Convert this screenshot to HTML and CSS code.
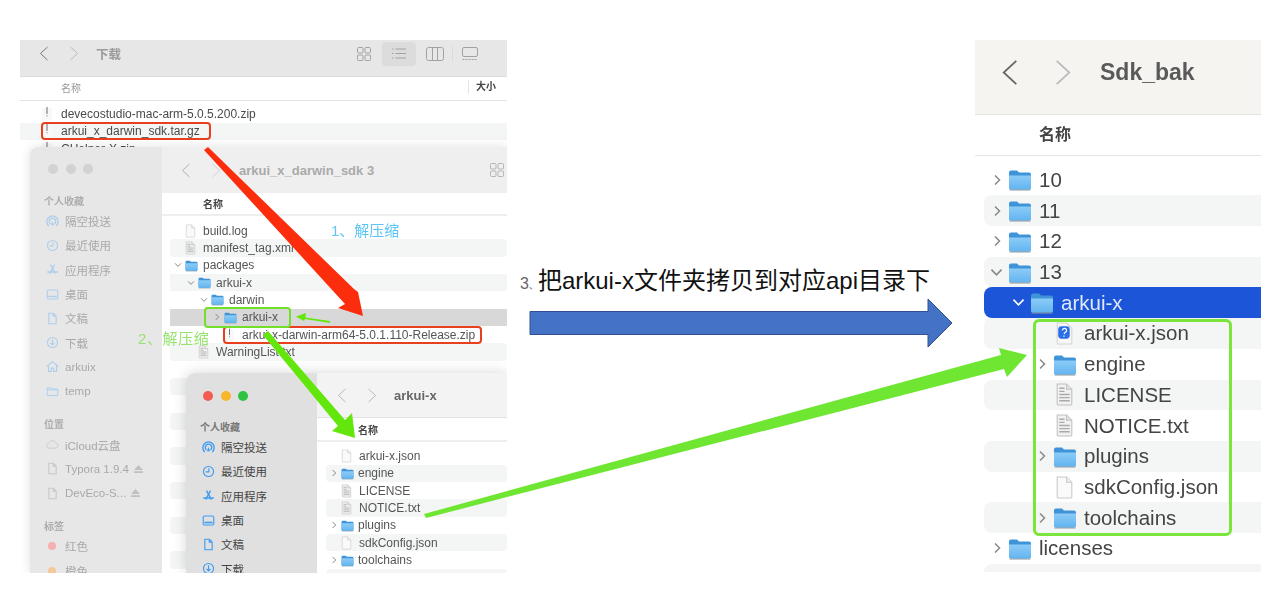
FILE: index.html
```html
<!DOCTYPE html>
<html lang="zh">
<head>
<meta charset="utf-8">
<title>arkui-x</title>
<link rel="stylesheet" href="styles.css">
</head>
<body>
<svg class="defs" width="0" height="0" aria-hidden="true">
  <defs>
    <linearGradient id="fg" x1="0" y1="0" x2="0" y2="1"><stop offset="0" stop-color="#8cccf7"/><stop offset="1" stop-color="#62b4f0"/></linearGradient>
    <symbol id="folder" viewBox="0 0 24 22">
      <path d="M1 4a2 2 0 0 1 2-2h6l2 2h10a2 2 0 0 1 2 2v13a2 2 0 0 1-2 2H3a2 2 0 0 1-2-2z" fill="#3f93d8"/>
      <path d="M1 7h22v12a2 2 0 0 1-2 2H3a2 2 0 0 1-2-2z" fill="url(#fg)"/>
      <path d="M1.500 21.500h21" stroke="#8f9aa3" stroke-width="1"/>
    </symbol>
    <symbol id="file" viewBox="0 0 18 22">
      <path d="M2 1h9l5 5v14a1 1 0 0 1-1 1H3a1 1 0 0 1-1-1z" fill="#fafafa" stroke="#c9c9c9"/>
      <path d="M11 1v5h5" fill="#eee" stroke="#c9c9c9"/>
    </symbol>
    <symbol id="doc" viewBox="0 0 18 22">
      <path d="M2 1h9l5 5v14a1 1 0 0 1-1 1H3a1 1 0 0 1-1-1z" fill="#f1f1f1" stroke="#c0c0c0"/>
      <path d="M11 1v5h5" fill="#e2e2e2" stroke="#c0c0c0"/>
      <path d="M4 5h5M4 8h5M4 11h10M4 14h10M4 17h10" stroke="#aaa" stroke-width="1.300"/>
    </symbol>
    <symbol id="json" viewBox="0 0 18 22">
      <path d="M2 1h9l5 5v14a1 1 0 0 1-1 1H3a1 1 0 0 1-1-1z" fill="#f7f7f7" stroke="#d5d5d5"/>
      <rect x="3" y="4" width="11" height="12" rx="3" fill="#2a6fe8"/>
      <path d="M7 8a2 2 0 1 1 2.500 2L8.500 11.500M8.500 13v1" fill="none" stroke="#fff" stroke-width="1.200"/>
    </symbol>
    <symbol id="zipfile" viewBox="0 0 12 14">
      <path d="M1 1h9l1 1v12H1z" fill="#f8f8f8"/>
      <path d="M6 0v7" stroke="#777" stroke-width="1.100"/>
      <path d="M6 8v1.500" stroke="#aaa" stroke-width="1.100"/>
    </symbol>
    <symbol id="chev-r" viewBox="0 0 8 12"><path d="M2 1.500 6.500 6 2 10.500" fill="none" stroke="currentColor" stroke-width="1.500"/></symbol>
    <symbol id="chev-t" viewBox="0 0 10 15"><path d="M1.500 1 8.500 7.500 1.500 14" fill="none" stroke="currentColor" stroke-width="1"/></symbol>
    <symbol id="chev-d" viewBox="0 0 12 8"><path d="M1.500 1.500 6 6l4.500-4.500" fill="none" stroke="currentColor" stroke-width="1.500"/></symbol>
    <symbol id="s-air" viewBox="0 0 16 16"><g fill="none" stroke="currentColor" stroke-width="1.700"><path d="M3.500 13.500a7 7 0 1 1 9 0"/><path d="M5.500 11a4 4 0 1 1 5 0"/></g><path d="M8 7.500l2 5H6z" fill="currentColor"/></symbol>
    <symbol id="s-clock" viewBox="0 0 16 16"><circle cx="8" cy="8" r="6.200" fill="none" stroke="currentColor" stroke-width="1.400"/><path d="M8.500 4v4.500H4.500" fill="none" stroke="currentColor" stroke-width="1.400"/></symbol>
    <symbol id="s-app" viewBox="0 0 16 16"><path d="M5.500 2l6 11M10.500 2l-6 11M1.500 11h13" fill="none" stroke="currentColor" stroke-width="1.700"/></symbol>
    <symbol id="s-desk" viewBox="0 0 16 16"><rect x="1.500" y="2.500" width="13" height="11" rx="1.500" fill="none" stroke="currentColor" stroke-width="1.400"/><path d="M3 10.500h10" stroke="currentColor" stroke-width="2"/></symbol>
    <symbol id="s-doc" viewBox="0 0 16 16"><path d="M3.500 1.500h5.500l3.500 3.500v9.500h-9z M9 1.500V5h3.500" fill="none" stroke="currentColor" stroke-width="1.400"/></symbol>
    <symbol id="s-down" viewBox="0 0 16 16"><circle cx="8" cy="8" r="6.200" fill="none" stroke="currentColor" stroke-width="1.400"/><path d="M8 4v7M5.500 8.500 8 11l2.500-2.500" fill="none" stroke="currentColor" stroke-width="1.400"/></symbol>
    <symbol id="s-home" viewBox="0 0 16 16"><path d="M1 8l7-6 7 6M3 7v7h3.500v-4h3v4H13V7" fill="none" stroke="currentColor" stroke-width="1.400"/></symbol>
    <symbol id="s-folder" viewBox="0 0 16 16"><path d="M1.500 3.500h4.500l1.500 1.500h7v8h-13zM1.500 6h13" fill="none" stroke="currentColor" stroke-width="1.200"/></symbol>
    <symbol id="s-cloud" viewBox="0 0 16 16"><path d="M4 12.500a3 3 0 0 1-.5-6A4.500 4.500 0 0 1 12 6a3.300 3.300 0 0 1 0 6.500z" fill="none" stroke="currentColor" stroke-width="1"/></symbol>
    <symbol id="s-eject" viewBox="0 0 10 9"><path d="M5 0l5 5.500H0zM0 7h10v2H0z" fill="currentColor"/></symbol>
  </defs>
</svg>

<main class="canvas">
  <section class="win win-a">
    <header class="a-head">
      <svg class="a-back"><use href="#chev-t"/></svg>
      <svg class="a-fwd"><use href="#chev-t"/></svg>
      <h2 class="a-title">下载</h2>
      <svg class="a-tool a-grid" viewBox="0 0 14 14"><g fill="none" stroke="currentColor"><rect x=".5" y=".5" width="5.500" height="5.500" rx="1"/><rect x="8" y=".5" width="5.500" height="5.500" rx="1"/><rect x=".5" y="8" width="5.500" height="5.500" rx="1"/><rect x="8" y="8" width="5.500" height="5.500" rx="1"/></g></svg>
      <span class="a-sel"><svg class="a-list" viewBox="0 0 14 11"><path d="M0 1h1.500M3.500 1H14M0 5.500h1.500M3.500 5.500H14M0 10h1.500M3.500 10H14" stroke="currentColor"/></svg></span>
      <svg class="a-tool a-cols" viewBox="0 0 18 14"><g fill="none" stroke="currentColor"><rect x=".5" y=".5" width="17" height="13" rx="2"/><path d="M6.500 .5v13M11.500 .5v13"/></g></svg>
      <span class="a-div"></span>
      <svg class="a-tool a-gal" viewBox="0 0 16 14"><g fill="none" stroke="currentColor"><rect x=".5" y=".5" width="15" height="9" rx="1.500"/><path d="M.5 12.500h15" stroke-dasharray="2 1"/></g></svg>
    </header>
    <div class="a-cols-head"><span class="a-name">名称</span><span class="a-size">大小</span></div>
    <ul class="a-rows">
      <li class="a-row"><svg class="a-zip"><use href="#zipfile"/></svg>devecostudio-mac-arm-5.0.5.200.zip</li>
      <li class="a-row band"><svg class="a-zip"><use href="#zipfile"/></svg>arkui_x_darwin_sdk.tar.gz</li>
      <li class="a-row"><svg class="a-zip"><use href="#zipfile"/></svg>CHelper-X.zip</li>
    </ul>
  </section>

  <section class="win win-b">
    <aside class="side side-b">
      <div class="lights"><i></i><i></i><i></i></div>
      <p class="side-h">个人收藏</p>
      <p class="side-i"><svg><use href="#s-air"/></svg>隔空投送</p>
      <p class="side-i"><svg><use href="#s-clock"/></svg>最近使用</p>
      <p class="side-i"><svg><use href="#s-app"/></svg>应用程序</p>
      <p class="side-i"><svg><use href="#s-desk"/></svg>桌面</p>
      <p class="side-i"><svg><use href="#s-doc"/></svg>文稿</p>
      <p class="side-i"><svg><use href="#s-down"/></svg>下载</p>
      <p class="side-i"><svg><use href="#s-home"/></svg>arkuix</p>
      <p class="side-i"><svg><use href="#s-folder"/></svg>temp</p>
      <p class="side-h gap">位置</p>
      <p class="side-i grey"><svg><use href="#s-cloud"/></svg>iCloud云盘</p>
      <p class="side-i grey"><svg><use href="#s-doc"/></svg>Typora 1.9.4<svg class="eject"><use href="#s-eject"/></svg></p>
      <p class="side-i grey"><svg><use href="#s-doc"/></svg>DevEco-S...<svg class="eject"><use href="#s-eject"/></svg></p>
      <p class="side-h gap">标签</p>
      <p class="side-i"><b class="dot red"></b>红色</p>
      <p class="side-i"><b class="dot orange"></b>橙色</p>
    </aside>
    <div class="pane">
      <header class="b-head">
        <svg class="b-back"><use href="#chev-t"/></svg>
        <svg class="b-fwd"><use href="#chev-t"/></svg>
        <h2 class="b-title">arkui_x_darwin_sdk 3</h2>
        <svg class="b-grid" viewBox="0 0 14 14"><g fill="none" stroke="currentColor"><rect x=".5" y=".5" width="5.500" height="5.500" rx="1"/><rect x="8" y=".5" width="5.500" height="5.500" rx="1"/><rect x=".5" y="8" width="5.500" height="5.500" rx="1"/><rect x="8" y="8" width="5.500" height="5.500" rx="1"/></g></svg>
      </header>
      <div class="b-cols">名称</div>
      <ul class="rows rows-b">
        <li class="row l0"><svg class="fi"><use href="#file"/></svg>build.log</li>
        <li class="row l0 band"><svg class="fi"><use href="#doc"/></svg>manifest_tag.xml</li>
        <li class="row l0"><svg class="ch"><use href="#chev-d"/></svg><svg class="fo"><use href="#folder"/></svg>packages</li>
        <li class="row l1 band"><svg class="ch"><use href="#chev-d"/></svg><svg class="fo"><use href="#folder"/></svg>arkui-x</li>
        <li class="row l2"><svg class="ch"><use href="#chev-d"/></svg><svg class="fo"><use href="#folder"/></svg>darwin</li>
        <li class="row l3 picked"><svg class="ch"><use href="#chev-r"/></svg><svg class="fo"><use href="#folder"/></svg>arkui-x</li>
        <li class="row l3"><svg class="fi"><use href="#zipfile"/></svg>arkui-x-darwin-arm64-5.0.1.110-Release.zip</li>
        <li class="row l1 band"><svg class="fi"><use href="#doc"/></svg>WarningList.txt</li>
        <li class="row"></li><li class="row band"></li><li class="row"></li><li class="row band"></li>
        <li class="row"></li><li class="row band"></li><li class="row"></li><li class="row band"></li>
        <li class="row"></li><li class="row band"></li><li class="row"></li><li class="row band"></li>
      </ul>
    </div>
  </section>

  <section class="win win-c">
    <aside class="side side-c">
      <div class="lights"><i></i><i></i><i></i></div>
      <p class="side-h">个人收藏</p>
      <p class="side-i"><svg><use href="#s-air"/></svg>隔空投送</p>
      <p class="side-i"><svg><use href="#s-clock"/></svg>最近使用</p>
      <p class="side-i"><svg><use href="#s-app"/></svg>应用程序</p>
      <p class="side-i"><svg><use href="#s-desk"/></svg>桌面</p>
      <p class="side-i"><svg><use href="#s-doc"/></svg>文稿</p>
      <p class="side-i"><svg><use href="#s-down"/></svg>下载</p>
    </aside>
    <div class="pane">
      <header class="c-head">
        <svg class="c-back"><use href="#chev-t"/></svg>
        <svg class="c-fwd"><use href="#chev-t"/></svg>
        <h2 class="c-title">arkui-x</h2>
      </header>
      <div class="c-cols">名称</div>
      <ul class="rows rows-c">
        <li class="row"><svg class="fi"><use href="#file"/></svg>arkui-x.json</li>
        <li class="row band"><svg class="ch"><use href="#chev-r"/></svg><svg class="fo"><use href="#folder"/></svg>engine</li>
        <li class="row"><svg class="fi"><use href="#doc"/></svg>LICENSE</li>
        <li class="row band"><svg class="fi"><use href="#doc"/></svg>NOTICE.txt</li>
        <li class="row"><svg class="ch"><use href="#chev-r"/></svg><svg class="fo"><use href="#folder"/></svg>plugins</li>
        <li class="row band"><svg class="fi"><use href="#file"/></svg>sdkConfig.json</li>
        <li class="row"><svg class="ch"><use href="#chev-r"/></svg><svg class="fo"><use href="#folder"/></svg>toolchains</li>
        <li class="row band"></li>
      </ul>
    </div>
  </section>

  <section class="win win-d">
    <header class="d-head">
      <svg class="d-back"><use href="#chev-t"/></svg>
      <svg class="d-fwd"><use href="#chev-t"/></svg>
      <h2 class="d-title">Sdk_bak</h2>
    </header>
    <div class="d-cols">名称</div>
    <ul class="d-rows">
      <li class="d-row"><svg class="ch"><use href="#chev-r"/></svg><svg class="fo"><use href="#folder"/></svg>10</li>
      <li class="d-row band"><svg class="ch"><use href="#chev-r"/></svg><svg class="fo"><use href="#folder"/></svg>11</li>
      <li class="d-row"><svg class="ch"><use href="#chev-r"/></svg><svg class="fo"><use href="#folder"/></svg>12</li>
      <li class="d-row band"><svg class="ch-d"><use href="#chev-d"/></svg><svg class="fo"><use href="#folder"/></svg>13</li>
      <li class="d-row d1 sel"><svg class="ch-d"><use href="#chev-d"/></svg><svg class="fo"><use href="#folder"/></svg>arkui-x</li>
      <li class="d-row d2 band"><svg class="fi"><use href="#json"/></svg>arkui-x.json</li>
      <li class="d-row d2"><svg class="ch"><use href="#chev-r"/></svg><svg class="fo"><use href="#folder"/></svg>engine</li>
      <li class="d-row d2 band"><svg class="fi"><use href="#doc"/></svg>LICENSE</li>
      <li class="d-row d2"><svg class="fi"><use href="#doc"/></svg>NOTICE.txt</li>
      <li class="d-row d2 band"><svg class="ch"><use href="#chev-r"/></svg><svg class="fo"><use href="#folder"/></svg>plugins</li>
      <li class="d-row d2"><svg class="fi"><use href="#file"/></svg>sdkConfig.json</li>
      <li class="d-row d2 band"><svg class="ch"><use href="#chev-r"/></svg><svg class="fo"><use href="#folder"/></svg>toolchains</li>
      <li class="d-row"><svg class="ch"><use href="#chev-r"/></svg><svg class="fo"><use href="#folder"/></svg>licenses</li>
      <li class="d-row band"></li>
    </ul>
  </section>

  <span class="note note-1">1、解压缩</span>
  <span class="note note-2">2、解压缩</span>
  <p class="step"><span class="step-n">3<span class="step-s">、</span></span>把arkui-x文件夹拷贝到对应api目录下</p>

  <span class="box box-r1"></span>
  <span class="box box-r2"></span>
  <span class="box box-g1"></span>
  <span class="box box-g2"></span>

  <svg class="marks" viewBox="0 0 1287 597" aria-hidden="true">
    <polygon class="m-blue" points="530,311.500 928,311.500 928,299 952,323 928,347 928,334.500 530,334.500"/>
    <polygon class="m-red" points="204,150 208,147 354,289 358,292 363,316 338,308 345,304"/>
    <polygon class="m-green" points="330,321 305.500,317.500 306,313 296,316.500 304,321 305,319 330,323"/>
    <polygon class="m-green" points="263,335 268,331 345,420 352,413 355,438 332,431 338,426"/>
    <polygon class="m-lime" points="424,514 1001,355 999,348 1027,355 1007,377 1004,369 426,518"/>
  </svg>
</main>
</body>
</html>
```
FILE: styles.css
```css
* { box-sizing: border-box; }
html, body { margin: 0; padding: 0; background: #fff; }
body { font-family: "Liberation Sans", "Noto Sans CJK SC", sans-serif; color: #555; }
.defs { position: absolute; }
.canvas { position: relative; width: 1287px; height: 597px; overflow: hidden; }
ul { list-style: none; margin: 0; padding: 0; }
p, h2 { margin: 0; }
svg { display: block; flex: none; }

.win { position: absolute; overflow: hidden; filter: blur(.45px); }
.band { background: #f4f5f5; }

/* window A: 下载 */
.win-a { left: 20px; top: 40px; width: 487px; height: 120px; background: #fff; }
.a-head { display: flex; align-items: center; height: 37px; padding-bottom: 9px; background: #e8e7e7; border-bottom: 1px solid #dcdcdc; }
.a-back { width: 10px; height: 15px; margin-left: 19px; color: #777; transform: scaleX(-1); }
.a-fwd { width: 10px; height: 15px; margin-left: 20px; color: #bbb; }
.a-title { margin-left: 17px; width: 261px; font-size: 12.500px; font-weight: 700; color: #9a9a9a; }
.a-tool { color: #a2a2a2; }
.a-grid { width: 14px; height: 14px; }
.a-sel { display: flex; align-items: center; justify-content: center; width: 34px; height: 24px; margin-left: 11px; border-radius: 4px; background: #dcdcdc; color: #a2a2a2; }
.a-list { width: 14px; height: 11px; }
.a-cols { width: 18px; height: 14px; margin-left: 10px; }
.a-div { width: 1px; height: 16px; margin-left: 8px; background: #dbdbdb; }
.a-gal { width: 16px; height: 14px; margin-left: 9px; }
.a-cols-head { display: flex; align-items: center; height: 23.500px; padding-bottom: 2px; border-bottom: 1px solid #e3e3e3; font-size: 10px; }
.a-name { margin-left: 41px; width: 407px; color: #999; }
.a-size { padding-left: 7px; border-left: 1px solid #e3e3e3; line-height: 14px; font-weight: 700; color: #444; }
.a-rows { padding-top: 4.500px; }
.a-row { display: flex; align-items: center; height: 17.500px; padding-left: 21px; font-size: 12px; color: #4a4a4a; }
.a-zip { width: 12px; height: 14px; margin-right: 8px; }

/* sidebars */
.side { flex: none; width: 132px; padding-top: 17px; font-size: 11.500px; }
.lights { display: flex; gap: 7.500px; height: 10px; margin-left: 18px; margin-bottom: 21px; }
.lights i { width: 10px; height: 10px; border-radius: 50%; background: #d2d2d2; }
.side-h { height: 14px; line-height: 14px; margin-left: 14px; font-size: 10px; font-weight: 700; color: #adadad; }
.side-h.gap { margin-top: 15px; }
.side-i { display: flex; align-items: center; height: 24.300px; margin-left: 16px; color: #a9a9a9; }
.side-i svg { width: 13px; height: 13px; margin-right: 6px; color: #aecfec; }
.side-i.grey svg { color: #c8c8c8; }
.side-i svg.eject { width: 9px; height: 8px; margin: 0 0 0 5px; color: #c0c0c0; }
.dot { width: 8px; height: 8px; margin: 0 9px 0 2px; border-radius: 50%; }
.dot.red { background: #f6b0b0; }
.dot.orange { background: #f5c89a; }

/* window B */
.win-b { display: flex; left: 30px; top: 147px; width: 477px; height: 426px; background: #fff; border-radius: 8px 0 0 0; box-shadow: 0 0 12px rgba(0,0,0,.12); filter: none; overflow: visible; clip-path: inset(-12px 0 0 -12px); }
.side-b { background: #e8e7e7; border-radius: 8px 0 0 0; filter: blur(.45px); overflow: hidden; }
.pane { flex: 1; min-width: 0; overflow: hidden; filter: blur(.45px); }
.b-head { display: flex; align-items: center; height: 46px; background: #f0efef; }
.b-back { width: 10px; height: 15px; margin-left: 19px; color: #b0b0b0; transform: scaleX(-1); }
.b-fwd { width: 10px; height: 15px; margin-left: 20px; color: #d5d5d5; }
.b-title { width: 251px; margin-left: 18px; font-size: 13px; font-weight: 700; color: #aaa; white-space: nowrap; }
.b-grid { width: 14px; height: 14px; color: #b5b5b5; }
.b-cols { display: flex; align-items: center; height: 23px; padding-left: 41px; border-bottom: 2px solid #eee; font-size: 10px; font-weight: 700; color: #444; }
.rows-b { margin: 6px 0 0 8px; }
.row { position: relative; display: flex; align-items: center; height: 17.330px; border-radius: 4px; font-size: 12px; color: #555; white-space: nowrap; }
.row .fo { width: 13px; height: 13px; margin-right: 5px; }
.row .fi { width: 11px; height: 14px; margin-right: 7px; }
.row .ch { width: 8px; height: 8px; margin-right: 3px; color: #888; }
.rows-b .l0 { padding-left: 15px; }
.rows-b .l1 { padding-left: 28px; }
.rows-b .l2 { padding-left: 41px; }
.rows-b .l3 { padding-left: 54px; }
.rows-b .row:has(.ch) { margin-left: -11px; border-radius: 0; }
.rows-b .band:has(.ch) { background: linear-gradient(90deg, #fff 11px, #f4f5f5 11px); }
.rows-b .picked:has(.ch) { background: linear-gradient(90deg, #fff 11px, #d8d8d8 11px); }

/* window C */
.win-c { display: flex; left: 186px; top: 373px; width: 321px; height: 200px; background: #fff; border-radius: 9px 0 0 0; box-shadow: 0 0 14px rgba(0,0,0,.16); filter: none; clip-path: inset(-14px 0 0 -14px); }
.side-c { width: 131px; background: #e0e0e0; padding-top: 18px; filter: blur(.45px); }
.side-c .lights { margin-left: 17px; margin-bottom: 20px; }
.side-c .lights i:nth-child(1) { background: #f25a52; }
.side-c .lights i:nth-child(2) { background: #f9b52b; }
.side-c .lights i:nth-child(3) { background: #30c241; }
.side-c .side-h { color: #777; }
.side-c .side-i { color: #444; }
.side-c .side-i svg { color: #3f9bf2; }
.c-head { display: flex; align-items: center; height: 45px; background: #f3f3f3; border-bottom: 1px solid #e2e2e2; }
.c-back { width: 10px; height: 15px; margin-left: 20px; color: #b8b8b8; transform: scaleX(-1); }
.c-fwd { width: 10px; height: 15px; margin-left: 20px; color: #b8b8b8; }
.c-title { margin-left: 17px; font-size: 13px; font-weight: 700; color: #666; }
.c-cols { display: flex; align-items: center; height: 24px; padding-left: 41px; border-bottom: 2px solid #eee; font-size: 10px; font-weight: 700; color: #444; }
.rows-c { margin: 5.500px 0 0 9px; }
.rows-c .row { padding-left: 15px; }
.rows-c .row:has(.ch) { padding-left: 4px; }
.rows-c .row .fo { margin-right: 4px; }

/* window D */
.win-d { left: 975px; top: 40px; width: 286px; height: 532px; background: #fff; }
.d-head { display: flex; align-items: center; height: 74.500px; padding-bottom: 8px; background: #f5f4f1; border-bottom: 1.500px solid #e4e3e1; }
.d-back { width: 18px; height: 27px; margin-left: 26px; color: #666; transform: scaleX(-1); }
.d-fwd { width: 18px; height: 27px; margin-left: 35px; color: #bbb; }
.d-title { margin-left: 28px; font-size: 23px; font-weight: 700; color: #5a5a5a; }
.d-cols { display: flex; align-items: center; height: 41px; padding: 0 0 4px 64px; border-bottom: 1.500px solid #e6e6e6; font-size: 16px; font-weight: 700; color: #444; }
.d-rows { margin: 9px 0 0 9px; }
.d-row { display: flex; align-items: center; height: 30.730px; padding-left: 8px; border-radius: 8px 0 0 8px; font-size: 20.500px; color: #444; white-space: nowrap; }
.d-row .ch { width: 8px; height: 12px; margin: 0 7px 0 1px; color: #888; }
.d-row .ch-d { width: 15px; height: 9px; margin: 0 4px 0 -3px; color: #888; }
.d-row .fo { width: 24px; height: 23px; margin-right: 7px; }
.d-row .fi { width: 19px; height: 23px; margin: 0 10px 0 19px; }
.d1 { padding-left: 30px; }
.d2 { padding-left: 53px; }
.d-row.d2:has(.fi) { padding-left: 52px; }
.sel { background: #1c55d8; color: #dfe9fb; border-radius: 8px 0 0 8px; }
.d-row.sel .ch-d { color: #fff; }

/* annotations */
.note { position: absolute; font-size: 15px; line-height: 16px; white-space: nowrap; }
.note-1 { left: 331px; top: 223px; color: #5cc5f5; }
.note-2 { left: 138px; top: 331px; letter-spacing: .6px; color: #96e36f; }
.step { position: absolute; left: 520px; top: 267px; font-size: 24px; line-height: 28px; color: #111; white-space: nowrap; }
.step-n { font-size: 16px; color: #666; }
.step-s { font-size: 9px; }
.box { position: absolute; border-radius: 4px; }
.box-r1 { left: 41px; top: 122px; width: 170px; height: 18px; border: 2px solid #e8401f; }
.box-r2 { left: 223px; top: 326px; width: 259px; height: 18px; border: 2px solid #e8401f; }
.box-g1 { left: 204px; top: 307px; width: 87px; height: 21px; border: 2px solid #72e02a; }
.box-g2 { left: 1033px; top: 319px; width: 199px; height: 217px; border: 3px solid #7be53b; border-radius: 6px; }
.marks { position: absolute; left: 0; top: 0; width: 1287px; height: 597px; }
.m-blue { fill: #4472c4; stroke: #2f528f; stroke-width: 1; }
.m-red { fill: #fb2d0c; }
.m-green { fill: #62e60c; }
.m-lime { fill: #6fe632; }
```
